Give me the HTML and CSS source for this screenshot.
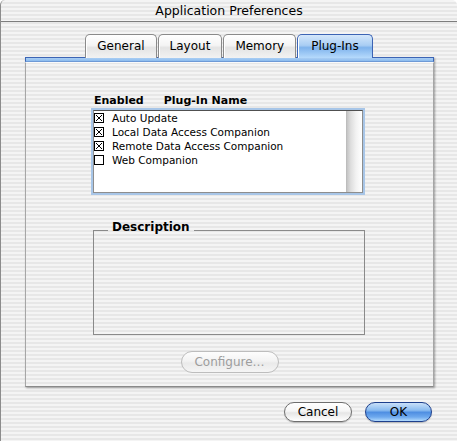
FILE: index.html
```html
<!DOCTYPE html>
<html lang="en">
  <head>
    <meta charset="UTF-8" />
    <title>Application Preferences</title>
    <link rel="stylesheet" href="styles.css">
  </head>
  <body>
    <div class="janela">
      <div class="barra-titulo">Application Preferences</div>

      <div class="abas">
        <div class="aba">General</div>
        <div class="aba">Layout</div>
        <div class="aba">Memory</div>
        <div class="aba ativa">Plug-Ins</div>
      </div>

      <div class="painel">
        <div class="faixa"></div>
        <div class="conteudo">
          <div class="cabecalho">
            <span>Enabled</span>
            <span>Plug-In Name</span>
          </div>

          <div class="lista">
            <ul id="plugins">
              <!-- itens gerados via script -->
            </ul>
            <div class="rolagem"></div>
          </div>

          <fieldset class="descricao">
            <legend>Description</legend>
          </fieldset>

          <div class="btn configurar">Configure…</div>
        </div>
      </div>

      <div class="acoes">
        <div class="btn">Cancel</div>
        <div class="btn padrao">OK</div>
      </div>
    </div>

    <script>
      const plugins = [
        { nome: "Auto Update", ativo: true },
        { nome: "Local Data Access Companion", ativo: true },
        { nome: "Remote Data Access Companion", ativo: true },
        { nome: "Web Companion", ativo: false },
      ];

      const marca = `<svg width="10" height="10" viewBox="0 0 10 10">
          <rect x="0.5" y="0.5" width="9" height="9" fill="#fff" stroke="#000"/>
          <path d="M2 2L8 8M8 2L2 8" stroke="#000" stroke-width="1"/>
        </svg>`;
      const vazio = `<svg width="10" height="10" viewBox="0 0 10 10">
          <rect x="0.5" y="0.5" width="9" height="9" fill="#fff" stroke="#000"/>
        </svg>`;

      const ul = document.getElementById("plugins");
      plugins.forEach((p) => {
        const li = document.createElement("li");
        li.innerHTML = `${p.ativo ? marca : vazio}<span>${p.nome}</span>`;
        ul.appendChild(li);
      });
    </script>
  </body>
</html>
```

FILE: styles.css
```css
body {
  margin: 0;
  width: 457px;
  height: 441px;
  overflow: hidden;
  font-family: "DejaVu Sans", sans-serif;
  color: #000;
  background: #fff;
}
.janela {
  height: 441px;
  box-sizing: border-box;
  border-left: 1px solid #8c8c8c;
  border-top-left-radius: 5px;
  border-top-right-radius: 5px;
  background: repeating-linear-gradient(
    to bottom,
    #f4f4f4 0,
    #f4f4f4 2px,
    #e7e7e7 2px,
    #e7e7e7 4px
  );
}
.barra-titulo {
  height: 21px;
  line-height: 22px;
  text-align: center;
  font-size: 12.5px;
  border-bottom: 1px solid #7d7d7d;
}
.abas {
  display: flex;
  justify-content: center;
  gap: 1px;
  margin-top: 12px;
  height: 23px;
  position: relative;
  z-index: 1;
}
.aba {
  box-sizing: border-box;
  height: 24px;
  line-height: 22px;
  padding: 0 11px;
  font-size: 12px;
  border: 1px solid #8a8a8a;
  border-bottom: none;
  border-radius: 5px 5px 0 0;
  background: linear-gradient(#ffffff 0%, #f4f4f4 45%, #e4e4e4 55%, #f2f2f2 100%);
  box-shadow: inset 1px 0 0 #fff;
}
.aba.ativa {
  padding: 0 13px;
  border-color: #3c64b4;
  background: linear-gradient(#d4e7fb 0%, #a9cdf3 45%, #7fb3ec 55%, #b6dafc 100%);
}
.painel {
  margin: 0 23px 0 24px;
  height: 330px;
  box-sizing: border-box;
  display: flex;
  flex-direction: column;
  box-shadow: 1px 1px 2px rgba(0, 0, 0, 0.35);
}
.faixa {
  height: 3px;
  border: 1px solid #3c64b4;
  border-bottom-color: #6f9ad6;
  background: linear-gradient(#a9cdf3, #8cbcef);
}
.conteudo {
  flex: 1;
  display: flex;
  flex-direction: column;
  align-items: flex-start;
  border: 1px solid #a6a6a6;
  border-top: 1px solid #fafafa;
  border-bottom-color: #8a8a8a;
  padding: 31px 0 0 67px;
}
.cabecalho {
  display: flex;
  gap: 20px;
  font-size: 11px;
  font-weight: bold;
  line-height: 14px;
  padding-left: 1px;
}
.lista {
  margin-top: 2px;
  width: 268px;
  height: 81px;
  display: flex;
  background: #fff;
  border: 1px solid #8e8e8e;
  border-top-color: #505050;
  box-shadow: 0 0 0 2px #a8c6e8;
}
.lista ul {
  flex: 1;
  list-style: none;
  margin: 0;
  padding: 0;
}
.lista li {
  display: flex;
  align-items: center;
  gap: 8px;
  height: 14px;
  font-size: 10.5px;
}
.rolagem {
  width: 15px;
  background: linear-gradient(to right, #c4c4c4, #dedede 25%, #f2f2f2 60%, #ffffff);
  border-left: 1px solid #bdbdbd;
}
.descricao {
  margin: 27px 0 0 0;
  width: 272px;
  height: 115px;
  box-sizing: border-box;
  border: 1px solid #8a8a8a;
  padding: 0;
}
.descricao legend {
  margin-left: 14px;
  padding: 0 4px 6px;
  font-size: 12px;
  font-weight: bold;
  line-height: 14px;
}
.btn {
  box-sizing: border-box;
  height: 20px;
  line-height: 18px;
  width: 68px;
  text-align: center;
  font-size: 12px;
  border: 1px solid #6e6e6e;
  border-radius: 10px;
  background: linear-gradient(#ffffff 0%, #f6f6f6 45%, #e6e6e6 55%, #f7f7f7 85%, #ffffff 100%);
  box-shadow: 0 1px 1px rgba(0, 0, 0, 0.2);
}
.configurar {
  align-self: center;
  margin: 16px 0 0 -67px;
  width: 98px;
  height: 22px;
  line-height: 20px;
  border-radius: 11px;
  color: #9d9d9d;
  border-color: #bdbdbd;
  background: linear-gradient(#fdfdfd 0%, #f3f3f3 45%, #eaeaea 55%, #f5f5f5 100%);
  box-shadow: none;
}
.acoes {
  display: flex;
  justify-content: flex-end;
  gap: 13px;
  margin: 15px 25px 0 0;
}
.btn.padrao {
  width: 67px;
  border-color: #1d3f8c;
  background: linear-gradient(#c9e0f8 0%, #8bbcf0 40%, #4f8fe2 52%, #6ea9ee 78%, #b3dbfd 100%);
}
```
